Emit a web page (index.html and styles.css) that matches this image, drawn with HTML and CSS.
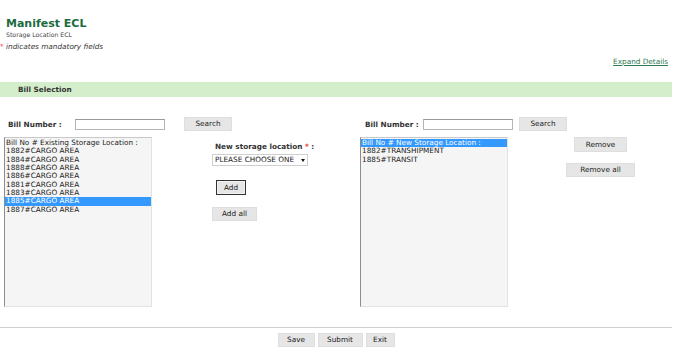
FILE: index.html
```html
<!DOCTYPE html>
<html>
<head>
<meta charset="utf-8" />
<title>Manifest ECL</title>
<link rel="stylesheet" href="styles.css">
</head>
<body>
<div class="page">
	<div class="head">
		<h1 class="title">Manifest ECL</h1>
		<div class="subtitle">Storage Location ECL</div>
		<div class="mandatory"><span class="req">*</span> indicates mandatory fields</div>
	</div>
	<div class="expand"><a href="#">Expand Details</a></div>
	<div class="bar">Bill Selection</div>

	<div class="panes">
		<div class="pane pane-left">
			<div class="search-row">
				<label class="lbl lbl-left">Bill Number :</label>
				<input type="text" class="txt" />
				<button class="btn btn-search search-left">Search</button>
			</div>
			<div class="pane-body">
				<div class="list list-left">
					<div class="opt">Bill No # Existing Storage Location :</div>
					<div class="opt">1882#CARGO AREA</div>
					<div class="opt">1884#CARGO AREA</div>
					<div class="opt">1888#CARGO AREA</div>
					<div class="opt">1886#CARGO AREA</div>
					<div class="opt">1881#CARGO AREA</div>
					<div class="opt">1883#CARGO AREA</div>
					<div class="opt selected">1885#CARGO AREA</div>
					<div class="opt">1887#CARGO AREA</div>
				</div>
				<div class="controls controls-add">
					<div class="lbl lbl-new">New storage location <span class="req">*</span> :</div>
					<div class="select">
						<span>PLEASE CHOOSE ONE</span>
						<span class="arrow"></span>
					</div>
					<button class="btn btn-add">Add</button>
					<button class="btn btn-addall">Add all</button>
				</div>
			</div>
		</div>

		<div class="pane pane-right">
			<div class="search-row">
				<label class="lbl lbl-right">Bill Number :</label>
				<input type="text" class="txt" />
				<button class="btn btn-search search-right">Search</button>
			</div>
			<div class="pane-body">
				<div class="list list-right">
					<div class="opt selected">Bill No # New Storage Location :</div>
					<div class="opt">1882#TRANSHIPMENT</div>
					<div class="opt">1885#TRANSIT</div>
				</div>
				<div class="controls controls-remove">
					<button class="btn btn-remove">Remove</button>
					<button class="btn btn-removeall">Remove all</button>
				</div>
			</div>
		</div>
	</div>

	<div class="footer">
		<button class="btn btn-save">Save</button>
		<button class="btn btn-submit">Submit</button>
		<button class="btn btn-exit">Exit</button>
	</div>
</div>
</body>
</html>
```

FILE: styles.css
```css
*{ margin:0; padding:0; box-sizing:border-box;}
body{ background:#fff; font-family:"DejaVu Sans", Verdana, sans-serif; font-size:7.3px; color:#222;}
.page{ width:672px;}

.head{ padding-top:17px;}
.title{ font-size:11px; line-height:13px; font-weight:bold; color:#1b6b3f; padding-left:6px;}
.subtitle{ font-size:6.2px; line-height:8px; margin-top:1px; padding-left:6px; color:#444;}
.mandatory{ line-height:9px; margin-top:3px; font-style:italic; color:#333;}
.req{ color:#e33; font-style:normal;}

.expand{ text-align:right; padding-right:4px; margin-top:6px; line-height:9px;}
.expand a{ color:#2f7a52; text-decoration:underline;}

.bar{ margin-top:16px; height:15px; line-height:15px; background:#d4eecb; padding-left:18px; font-weight:bold; color:#333;}

.panes{ display:flex; margin-top:20px;}
.pane-left{ width:360px; padding-left:3px;}
.pane-right{ flex:1;}

.search-row{ display:flex; align-items:center; height:14px;}
.lbl{ font-weight:bold; color:#333; line-height:9px;}
.lbl-left{ width:72px; padding-left:5px;}
.lbl-right{ width:63px; padding-left:5px;}
.txt{ width:90px; height:11px; border:1px solid #b5b5b5; border-top-color:#999; background:#fff;}

.btn{ font-family:inherit; font-size:7.3px; color:#222; background:#e6e6e6; border:1px solid #dedede; height:14px; line-height:12px; text-align:center; cursor:pointer;}
.btn-search{ width:48px;}
.search-left{ margin-left:19px;}
.search-right{ margin-left:6px;}

.pane-body{ display:flex; margin-top:6px;}
.list{ width:148px; height:170px; background:#f5f5f5; border:1px solid #e2e2e2; border-left-color:#8c8c8c; border-top-color:#c8c8c8; padding-top:1px;}
.list-left{ margin-left:1px;}
.opt{ line-height:8.33px; height:8.33px; padding-left:1px; white-space:nowrap; color:#222;}
.opt.selected{ background:#3399ff; color:#fff;}

.controls{ display:flex; flex-direction:column;}
.controls-add{ margin-left:60px; padding-top:5px; align-items:flex-start;}
.lbl-new{ padding-left:3px;}
.select{ position:relative; width:96px; height:12px; margin-top:3px; border:1px solid #cfcfcf; background:#fff; line-height:10px; padding-left:2px; color:#222;}
.arrow{ position:absolute; right:2px; top:4px; width:0; height:0; border-left:2.5px solid transparent; border-right:2.5px solid transparent; border-top:3px solid #111;}
.btn-add{ width:30px; height:15px; margin-top:14px; margin-left:4px; border:1px solid #333; box-shadow:inset 0 0 0 1px #f2f2f2;}
.btn-addall{ width:45px; margin-top:12px;}

.controls-remove{ margin-left:58px; width:69px; align-items:center;}
.btn-remove{ width:53px; height:15px;}
.btn-removeall{ width:69px; margin-top:11px;}

.footer{ margin-top:20px; border-top:1px solid #cfcfcf; box-shadow:0 1px 0 #ececec; padding-top:5px; display:flex; justify-content:center; gap:3px;}
.btn-save{ width:37px;}
.btn-submit{ width:45px;}
.btn-exit{ width:29px;}
```
